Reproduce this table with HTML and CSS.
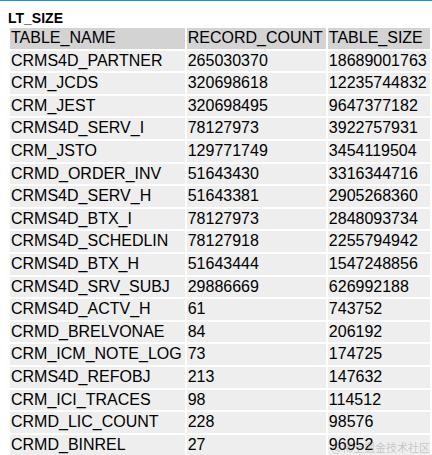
FILE: index.html
```html
<!DOCTYPE html>
<html>
<head>
<meta charset="utf-8">
<link rel="stylesheet" href="styles.css">
</head>
<body>
<div class="topline"></div>
<div class="page">
  <div class="title">LT_SIZE</div>
  <table class="grid">
    <tr class="head"><th>TABLE_NAME</th><th>RECORD_COUNT</th><th>TABLE_SIZE</th></tr>
    <tr><td>CRMS4D_PARTNER</td><td>265030370</td><td>18689001763</td></tr>
    <tr><td>CRM_JCDS</td><td>320698618</td><td>12235744832</td></tr>
    <tr><td>CRM_JEST</td><td>320698495</td><td>9647377182</td></tr>
    <tr><td>CRMS4D_SERV_I</td><td>78127973</td><td>3922757931</td></tr>
    <tr><td>CRM_JSTO</td><td>129771749</td><td>3454119504</td></tr>
    <tr><td>CRMD_ORDER_INV</td><td>51643430</td><td>3316344716</td></tr>
    <tr><td>CRMS4D_SERV_H</td><td>51643381</td><td>2905268360</td></tr>
    <tr><td>CRMS4D_BTX_I</td><td>78127973</td><td>2848093734</td></tr>
    <tr><td>CRMS4D_SCHEDLIN</td><td>78127918</td><td>2255794942</td></tr>
    <tr><td>CRMS4D_BTX_H</td><td>51643444</td><td>1547248856</td></tr>
    <tr><td>CRMS4D_SRV_SUBJ</td><td>29886669</td><td>626992188</td></tr>
    <tr><td>CRMS4D_ACTV_H</td><td>61</td><td>743752</td></tr>
    <tr><td>CRMD_BRELVONAE</td><td>84</td><td>206192</td></tr>
    <tr><td>CRM_ICM_NOTE_LOG</td><td>73</td><td>174725</td></tr>
    <tr><td>CRMS4D_REFOBJ</td><td>213</td><td>147632</td></tr>
    <tr><td>CRM_ICI_TRACES</td><td>98</td><td>114512</td></tr>
    <tr><td>CRMD_LIC_COUNT</td><td>228</td><td>98576</td></tr>
    <tr><td>CRMD_BINREL</td><td>27</td><td>96952</td></tr>
  </table>
</div>
<div class="watermark">@稀土掘金技术社区</div>
</body>
</html>
```

FILE: styles.css
```css
html, body {
  margin: 0;
  padding: 0;
  background: #ffffff;
  font-family: "Liberation Sans", Arial, sans-serif;
  color: #000000;
}
.topline {
  height: 1px;
  background: #1a96d8;
}
.page {
  padding: 9px 8px 0 8px;
}
.title {
  font-size: 14px;
  font-weight: bold;
  line-height: 16px;
}
.grid {
  border-collapse: separate;
  border-spacing: 2px;
  font-size: 16px;
}
.grid th,
.grid td {
  padding: 1px 3px 1px 1px;
  text-align: left;
  font-weight: normal;
  white-space: nowrap;
  line-height: 18.6px;
}
.grid th {
  background: #d3d3d3;
}
.grid td {
  background: #eeeeee;
}
.watermark {
  position: absolute;
  right: 2px;
  top: 439px;
  font-family: "Noto Sans CJK SC", sans-serif;
  font-size: 11px;
  color: rgba(120, 120, 120, 0.35);
}
```
